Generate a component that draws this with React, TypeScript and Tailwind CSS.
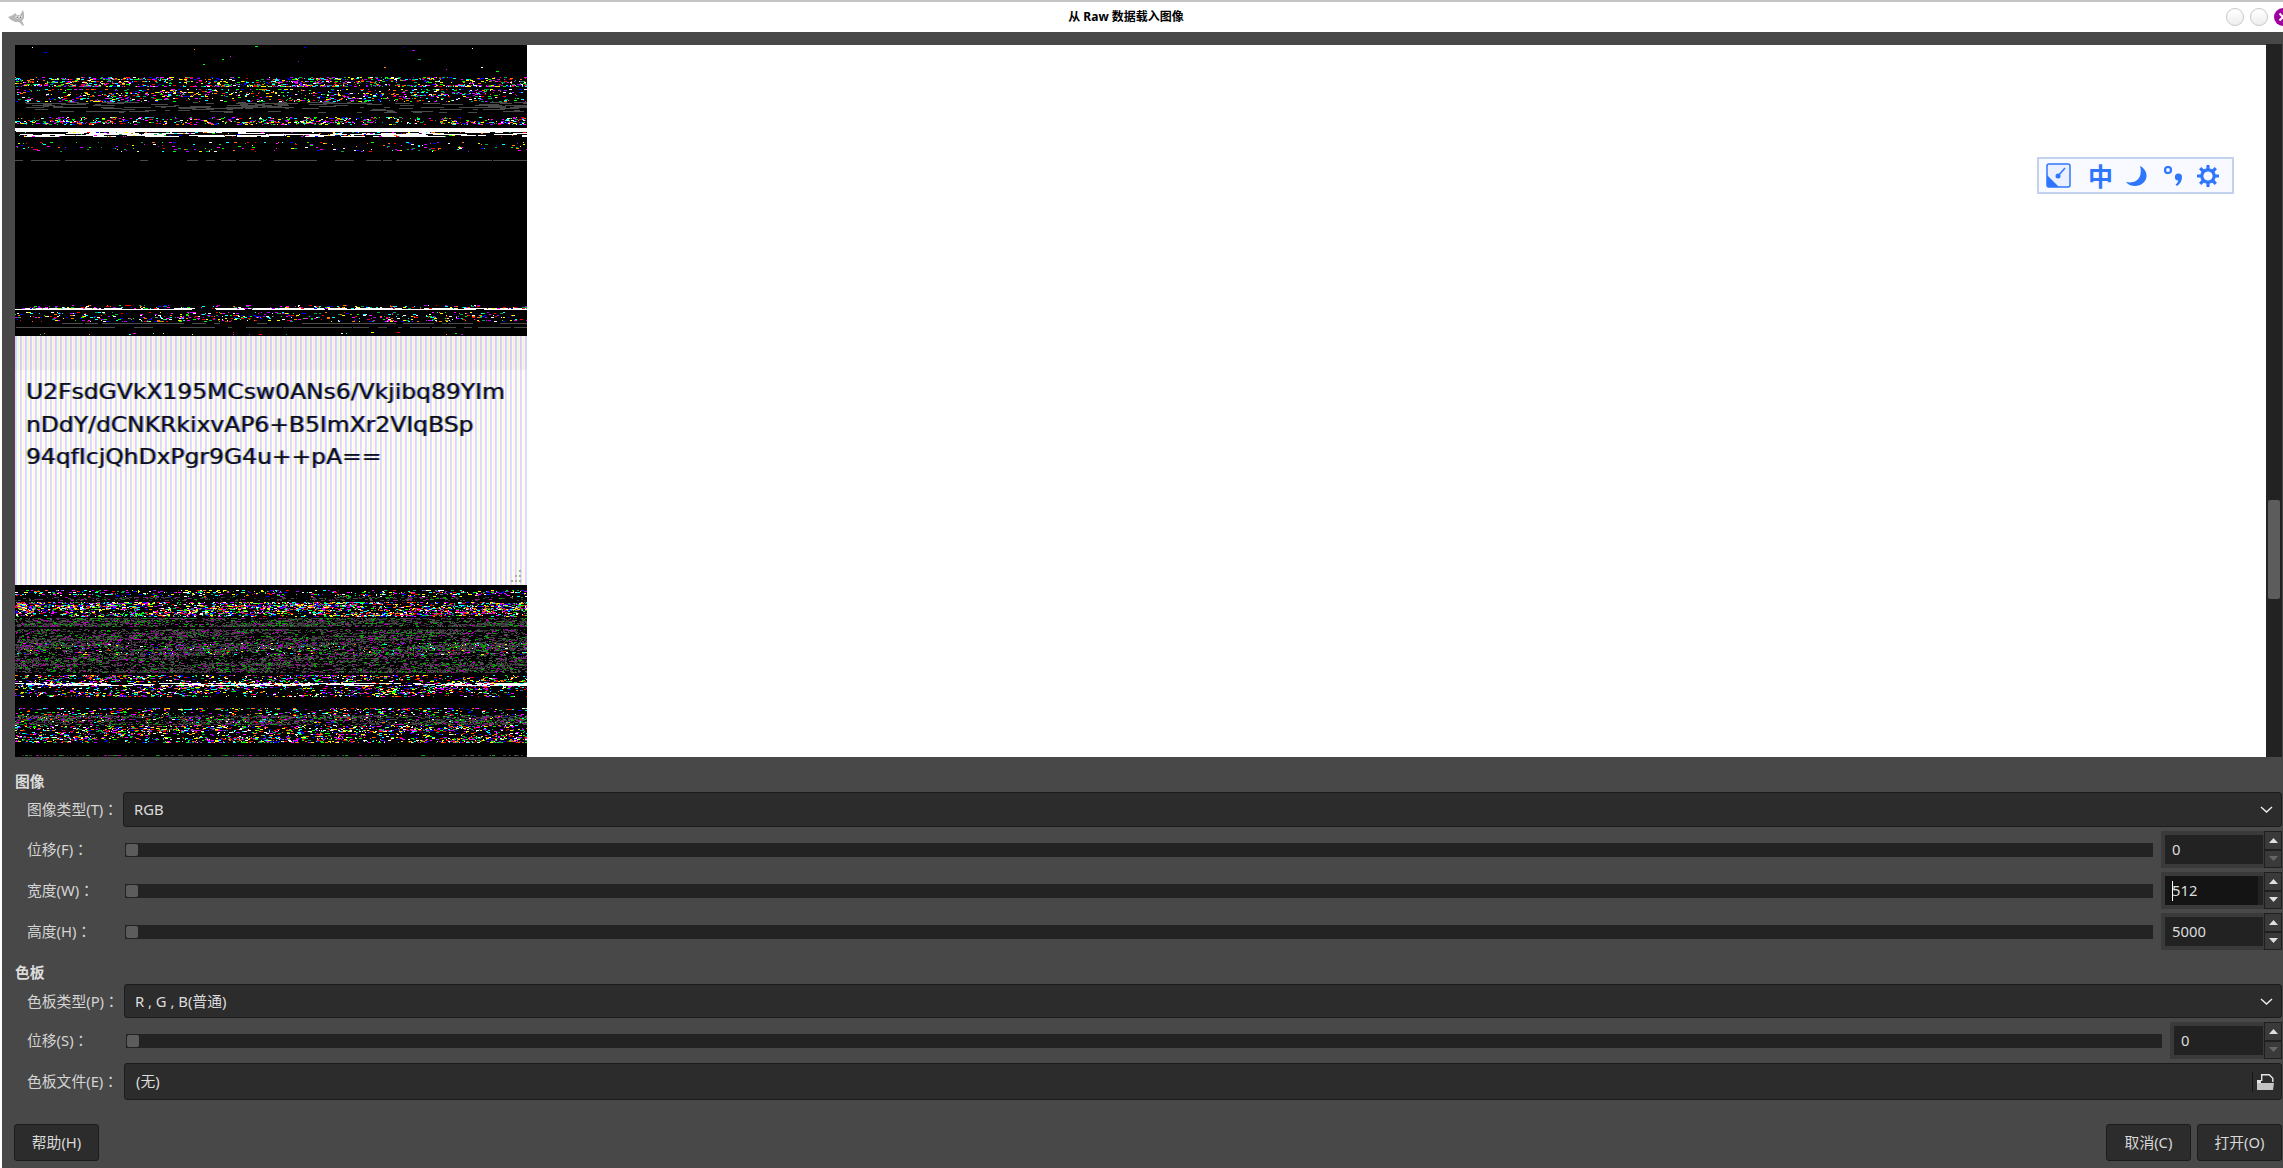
import { useMemo } from "react";

const font = "font-['Noto_Sans','Noto_Sans_CJK_SC',sans-serif]";

// small seeded random so the noise stays the same on every load
function makeRandom(seed: number) {
    let s = seed;
    return () => {
        s = (s * 1664525 + 1013904223) % 4294967296;
        return s / 4294967296;
    };
}

const bright = ["#ffffff", "#ff0000", "#00ff00", "#0000ff", "#ff00ff", "#00ffff", "#ffff00", "#aa00ff", "#00aa55", "#ff7700"];
const dim = ["#444444", "#444444", "#555555", "#333333", "#3c3c3c", "#4a4a4a", "#2f2f2f", "#00aa00", "#aa00aa"];

type Band = [number, number, number, "bright" | "dim" | "white" | "grey"];

// y start, y end, how many runs start per pixel, which colours
const topBands: Band[] = [
    [1, 28, 0.001, "bright"],
    [32, 40, 0.2, "bright"],
    [40, 42, 0.35, "bright"],
    [44, 57, 0.12, "bright"],
    [57, 68, 0.03, "grey"],
    [72, 80, 0.16, "bright"],
    [83, 87, 0.5, "white"],
    [87, 92, 0.05, "white"],
    [87, 92, 0.06, "bright"],
    [97, 107, 0.04, "bright"],
    [115, 116, 0.12, "grey"],
    [260, 264, 0.1, "bright"],
    [263, 265, 0.1, "white"],
    [267, 277, 0.1, "bright"],
    [278, 279, 0.1, "grey"],
    [282, 283, 0.1, "grey"],
    [287, 290, 0.012, "bright"],
];

const bottomBands: Band[] = [
    [5, 12, 0.13, "bright"],
    [12, 16, 0.12, "dim"],
    [17, 32, 0.3, "bright"],
    [33, 42, 0.35, "dim"],
    [44, 88, 0.35, "dim"],
    [58, 70, 0.09, "bright"],
    [90, 112, 0.18, "bright"],
    [98, 101, 0.06, "white"],
    [123, 138, 0.12, "bright"],
    [130, 140, 0.3, "dim"],
    [140, 158, 0.18, "bright"],
    [170, 171, 0.2, "dim"],
];

function Noise({ bands, height, seed }: { bands: Band[]; height: number; seed: number }) {
    const paths = useMemo(() => {
        const rnd = makeRandom(seed);
        const byColour: Record<string, string[]> = {};
        for (const [y0, y1, density, kind] of bands) {
            for (let y = y0; y < y1; y++) {
                const rowDensity = density * (0.55 + rnd() * 0.9);
                for (let x = 0; x < 512; x++) {
                    const clump = Math.sin(x / 37 + y / 3) > -0.2 ? 1.2 : 0.6;
                    if (rnd() > rowDensity * clump) continue;
                    let colour = "#ffffff";
                    let run = 1 + Math.floor(rnd() * 3);
                    if (kind === "bright") colour = bright[Math.floor(rnd() * bright.length)];
                    if (kind === "dim") colour = dim[Math.floor(rnd() * dim.length)];
                    if (kind === "grey") {
                        colour = "#4a4a4a";
                        run = 4 + Math.floor(rnd() * 20);
                    }
                    if (kind === "white") run = 6 + Math.floor(rnd() * 30);
                    (byColour[colour] ||= []).push(`M${x} ${y}h${run}v1h-${run}z`);
                }
            }
        }
        return Object.entries(byColour);
    }, [bands, seed]);

    return (
        <svg width="512" height={height} viewBox={`0 0 512 ${height}`} shapeRendering="crispEdges" className="block bg-black">
            {paths.map(([colour, d]) => (
                <path key={colour} d={d.join("")} fill={colour} />
            ))}
        </svg>
    );
}

function Chevron() {
    return (
        <svg width="13" height="7" viewBox="0 0 13 7" className="shrink-0">
            <path d="M1 1l5.5 5L12 1" fill="none" stroke="#eeeeee" strokeWidth="1.4" />
        </svg>
    );
}

function Combo({ text, h }: { text: string; h: string }) {
    return (
        <div className={`flex-1 flex items-center justify-between ${h} pl-[10px] pr-[8px] bg-[#2c2c2c] border border-[#1b1b1b] rounded-[3px] text-[#dcdcdc]`}>
            <span>{text}</span>
            <Chevron />
        </div>
    );
}

function Slider() {
    return (
        <div className="flex-1 ml-[2px] h-[14px] bg-[#232323] flex items-center pl-[1px]">
            <div className="w-[12px] h-[12px] bg-[#5c5c5c] rounded-[2px]" />
        </div>
    );
}

function Arrow({ up, off }: { up: boolean; off?: boolean }) {
    return (
        <div className="flex-1 flex items-center justify-center bg-[#3a3a3a] border border-[#1f1f1f]">
            <svg width="9" height="5" viewBox="0 0 9 5">
                <path d={up ? "M4.5 0L9 5H0z" : "M0 0h9L4.5 5z"} fill={off ? "#666666" : "#e0e0e0"} />
            </svg>
        </div>
    );
}

function Spin({ value, width, focused, off }: { value: string; width: string; focused?: boolean; off?: boolean }) {
    return (
        <div className={`flex h-[37px] ${width} shrink-0`}>
            <div className="flex-1 bg-[#3a3a3a] py-[4px] pl-[4px] pr-[1px]">
                <div className={`h-full flex items-center pl-[7px] text-[#dcdcdc] ${focused ? "bg-[linear-gradient(to_right,#141414_95%,#222222_95%)]" : "bg-[#222222]"}`}>
                    {focused ? <span className="w-[1px] h-[20px] bg-white -mr-[1px]" /> : null}
                    <span>{value}</span>
                </div>
            </div>
            <div className="w-[18px] flex flex-col">
                <Arrow up />
                <Arrow up={false} off={off} />
            </div>
        </div>
    );
}

function Row({ label, labelW, children }: { label: string; labelW: string; children: React.ReactNode }) {
    return (
        <div className="flex items-center">
            <div className={`${labelW} shrink-0 whitespace-nowrap text-[#d4d4d4]`}>
                {label}
                <span className="font-['Noto_Sans_CJK_TC',sans-serif]">：</span>
            </div>
            {children}
        </div>
    );
}

function SliderRow({ label, labelW, value, width, focused, off }: { label: string; labelW: string; value: string; width: string; focused?: boolean; off?: boolean }) {
    return (
        <Row label={label} labelW={labelW}>
            <div className="flex-1 flex items-center gap-[8px]">
                <Slider />
                <Spin value={value} width={width} focused={focused} off={off} />
            </div>
        </Row>
    );
}

function Btn({ text }: { text: string }) {
    return (
        <button className="w-[85px] h-[37px] bg-[#2c2c2c] border border-[#1b1b1b] rounded-[3px] text-[#d8d8d8]">{text}</button>
    );
}

function Wilber() {
    return (
        <svg width="18" height="16" viewBox="0 0 18 16">
            <path d="M0 7l5-2 2-2 2 2h3l3-5 1 3v5l-2 3 2 4-1 1-4-4H7l-4-2z" fill="#b8b8b8" />
            <circle cx="9" cy="7" r="1.600" fill="#eeeeee" />
            <circle cx="12.500" cy="7" r="1.600" fill="#eeeeee" />
            <circle cx="9.200" cy="7.200" r=".7" fill="#555555" />
            <circle cx="12.500" cy="7.200" r=".7" fill="#555555" />
        </svg>
    );
}

function Toolbar() {
    return (
        <div className="absolute top-[112px] right-[32px] w-[197px] h-[37px] bg-[#f8faff] border-2 border-[#c3d2ee] flex items-center text-[#2f76ff]">
            <svg width="25" height="25" viewBox="0 0 25 25" className="ml-[7px] shrink-0">
                <rect x="1" y="1" width="23" height="23" rx="2" fill="#eaf0ff" stroke="#2f76ff" strokeWidth="1.500" />
                <path d="M1 12l12 12H3a2 2 0 0 1-2-2z" fill="#2f76ff" />
                <circle cx="12" cy="13" r="2.500" fill="#2f76ff" />
                <path d="M12 13l7-8" stroke="#2f76ff" strokeWidth="1.500" />
            </svg>
            <span className="ml-[17px] w-[24px] text-center text-[25px] leading-none font-bold font-['Noto_Sans_CJK_SC',sans-serif]">中</span>
            <svg width="21" height="20" viewBox="0 0 21 20" className="ml-[14px] shrink-0">
                <path d="M14 0c4 2 7 6 6.500 10.500C20 16 15 20 9 20c-4 0-7-1.500-9-4 7 1.500 12-1 14-6 1-3.500 1-7 0-10z" fill="#2f76ff" />
            </svg>
            <svg width="19" height="20" viewBox="0 0 19 20" className="ml-[17px] shrink-0">
                <circle cx="4" cy="4" r="3" fill="none" stroke="#2f76ff" strokeWidth="2.200" />
                <path d="M14.500 7.500a3.500 3.500 0 0 1 3.500 3.500c0 4-2 7-5 9l-1.500-1.500c1.500-1 2.500-2.500 2.800-4a3.500 3.500 0 0 1 .2-7z" fill="#2f76ff" />
            </svg>
            <svg width="22" height="22" viewBox="0 0 22 22" className="ml-[14px] shrink-0">
                <circle cx="11" cy="11" r="6.200" fill="none" stroke="#2f76ff" strokeWidth="3.200" />
                <path d="M11 0v4M11 18v4M0 11h4M18 11h4M3.200 3.200l2.800 2.800M16 16l2.800 2.800M3.200 18.800L6 16M16 6l2.800-2.800" stroke="#2f76ff" strokeWidth="3.200" />
            </svg>
        </div>
    );
}

export default function App() {
    return (
        <div className={`h-screen w-screen overflow-hidden flex flex-col bg-white text-[14.8px] ${font}`}>
            <div className="h-[2px] bg-[#c4c4c4]" />

            <div className="h-[30px] flex items-center bg-white relative">
                <div className="ml-[8px] mt-[1px]">
                    <Wilber />
                </div>
                <div className="flex-1 text-center text-[12px] font-bold text-black">从 Raw 数据载入图像</div>
                <div className="flex items-center gap-[6px] -mr-[9px] shrink-0">
                    <div className="w-[18px] h-[18px] rounded-full border border-[#c8c8c8] bg-[linear-gradient(to_bottom,#ffffff,#eeeeee)]" />
                    <div className="w-[18px] h-[18px] rounded-full border border-[#c8c8c8] bg-[linear-gradient(to_bottom,#ffffff,#eeeeee)]" />
                    <svg width="18" height="18" viewBox="0 0 18 18">
                        <circle cx="9" cy="9" r="9" fill="#a000a0" />
                        <path d="M5.500 5.500l7 7M12.500 5.500l-7 7" stroke="#ffffff" strokeWidth="2" />
                    </svg>
                </div>
            </div>

            <div className="flex-1 ml-[2px] bg-[#484848] flex flex-col min-h-0">
                <div className="h-[725px] shrink-0 pt-[13px] pl-[13px] flex">
                    <div className="flex-1 bg-white flex relative">
                        <div className="w-[512px] flex flex-col">
                            <Noise bands={topBands} height={291} seed={7} />
                            <div className="h-[249px] relative bg-[repeating-linear-gradient(to_right,#ffc4ff_0px,#ffc4ff_1px,#c4ecff_1px,#c4ecff_2px,#ffffff_2px,#ffffff_3px,#ffffc8_3px,#ffffc8_4px,#ffffff_4px,#ffffff_5px)]">
                                <div className="h-[34px] bg-[#0000000a]" />
                                <div className="pl-[10px] pt-[6px] origin-left scale-x-[1.09] font-['DejaVu_Sans',sans-serif] text-[21.500px] leading-[32.500px] text-[#10101a] [text-shadow:1px_0_0_rgba(0,0,255,0.45),-1px_0_0_rgba(120,180,0,0.45)]">
                                    <div>U2FsdGVkX195MCsw0ANs6/Vkjibq89YIm</div>
                                    <div>nDdY/dCNKRkixvAP6+B5ImXr2VIqBSp</div>
                                    <div>94qfIcjQhDxPgr9G4u++pA==</div>
                                </div>
                                <svg width="12" height="12" viewBox="0 0 12 12" className="absolute right-[4px] bottom-[3px]">
                                    <path d="M8 0h2v2H8zM4 5h2v2H4zM8 5h2v2H8zM0 10h2v2H0zM4 10h2v2H4zM8 10h2v2H8z" fill="#aaaaaa" />
                                </svg>
                            </div>
                            <Noise bands={bottomBands} height={172} seed={23} />
                        </div>
                        <Toolbar />
                    </div>
                    <div className="w-[16px] mr-[1px] -mt-[1px] bg-[#222222] pt-[456px] px-[2px] shrink-0">
                        <div className="h-[99px] bg-[#5c5c5c] rounded-[2px]" />
                    </div>
                </div>

                <div className="pt-[14px] pl-[13px] pr-[1px] flex flex-col">
                    <div className="h-[20px] leading-[20px] font-bold text-[#dcdcdc]">图像</div>
                    <div className="pl-[12px] mt-[1px] flex flex-col gap-[4px]">
                        <Row label="图像类型(T)" labelW="w-[96px]">
                            <Combo text="RGB" h="h-[35px]" />
                        </Row>
                        <SliderRow label="位移(F)" labelW="w-[96px]" value="0" width="w-[121px]" off />
                        <SliderRow label="宽度(W)" labelW="w-[96px]" value="512" width="w-[121px]" focused />
                        <SliderRow label="高度(H)" labelW="w-[96px]" value="5000" width="w-[121px]" />
                    </div>

                    <div className="h-[20px] leading-[20px] mt-[12px] font-bold text-[#dcdcdc]">色板</div>
                    <div className="pl-[12px] mt-[2px] flex flex-col gap-[4px]">
                        <Row label="色板类型(P)" labelW="w-[97px]">
                            <Combo text="R , G , B(普通)" h="h-[34px]" />
                        </Row>
                        <SliderRow label="位移(S)" labelW="w-[97px]" value="0" width="w-[112px]" off />
                        <Row label="色板文件(E)" labelW="w-[97px]">
                            <div className="flex-1 h-[37px] flex items-center pl-[11px] pr-[7px] bg-[#2c2c2c] border border-[#1b1b1b] rounded-[3px] text-[#dcdcdc]">
                                <span className="flex-1">(无)</span>
                                <div className="w-[1px] h-[20px] bg-[#151515] mr-[4px]" />
                                <svg width="17" height="16" viewBox="0 0 17 16">
                                    <path d="M4.700 7V.7h7.500l3.600 3.600V8" fill="none" stroke="#e4e4e4" strokeWidth="1.400" />
                                    <path d="M0 6h4v4H0z" fill="#e4e4e4" />
                                    <path d="M0 16V9h17l-1 7z" fill="#c4c4c4" />
                                </svg>
                            </div>
                        </Row>
                    </div>

                    <div className="mt-[24px] flex justify-between">
                        <div className="-ml-[1px]">
                            <Btn text="帮助(H)" />
                        </div>
                        <div className="flex gap-[6px]">
                            <Btn text="取消(C)" />
                            <Btn text="打开(O)" />
                        </div>
                    </div>
                </div>
            </div>
        </div>
    );
}
